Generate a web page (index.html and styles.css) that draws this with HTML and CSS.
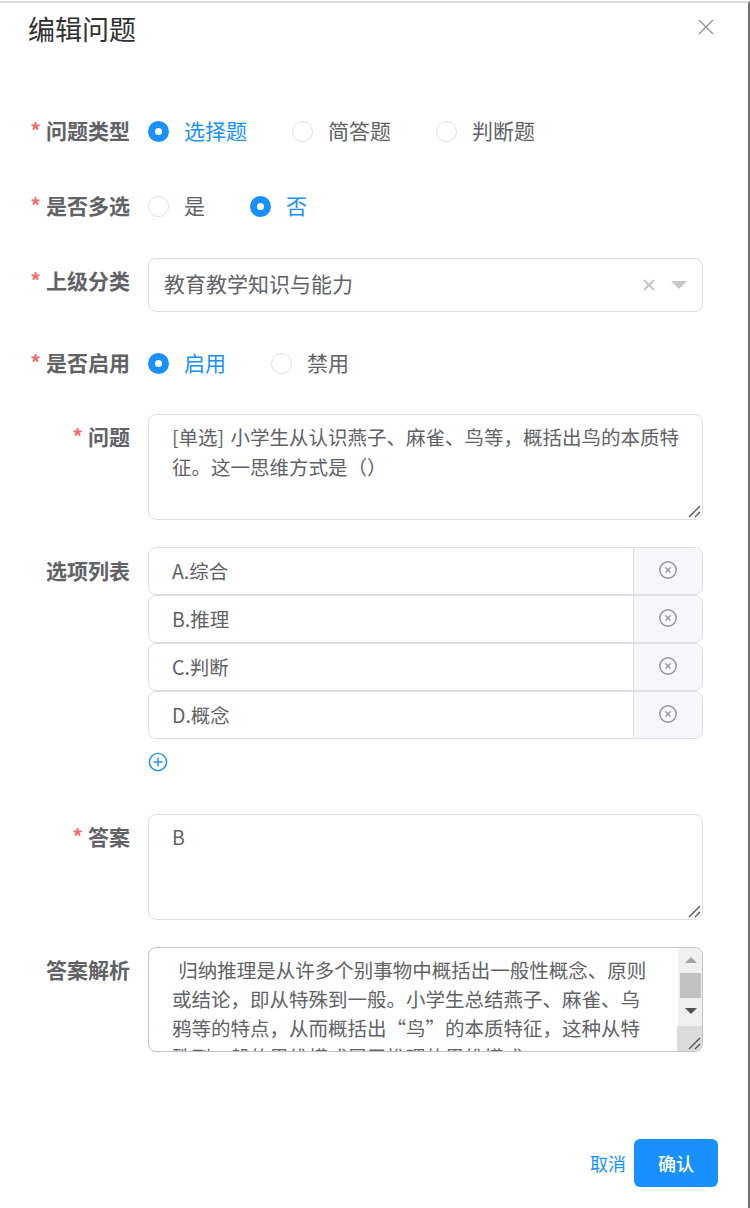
FILE: index.html
```html
<!DOCTYPE html>
<html lang="zh-CN">
<head>
  <meta charset="UTF-8">
  <title>编辑问题</title>
  <link rel="stylesheet" href="styles.css">
</head>
<body>
  <div class="dialog">
    <div class="dialog-header">
      <span class="dialog-title">编辑问题</span>
      <svg class="close" width="16" height="16" viewBox="0 0 16 16"><path d="M1 1L15 15M15 1L1 15" stroke="#909399" stroke-width="1.4" fill="none"/></svg>
    </div>

    <form class="form">
      <div class="row row-type">
        <label class="label required">问题类型</label>
        <div class="radios">
          <span class="radio checked"><i></i>选择题</span>
          <span class="radio"><i></i>简答题</span>
          <span class="radio"><i></i>判断题</span>
        </div>
      </div>

      <div class="row row-multi">
        <label class="label required">是否多选</label>
        <div class="radios">
          <span class="radio"><i></i>是</span>
          <span class="radio checked"><i></i>否</span>
        </div>
      </div>

      <div class="row row-parent">
        <label class="label required">上级分类</label>
        <div class="select">
          <span>教育教学知识与能力</span>
          <svg class="clear" width="12" height="12" viewBox="0 0 12 12"><path d="M1 1L11 11M11 1L1 11" stroke="#c8c8c8" stroke-width="2.2" fill="none"/></svg>
          <span class="caret"></span>
        </div>
      </div>

      <div class="row row-enable">
        <label class="label required">是否启用</label>
        <div class="radios">
          <span class="radio checked"><i></i>启用</span>
          <span class="radio"><i></i>禁用</span>
        </div>
      </div>

      <div class="row row-question">
        <label class="label required">问题</label>
        <div class="textarea">[单选] 小学生从认识燕子、麻雀、鸟等，概括出鸟的本质特征。这一思维方式是（）<svg class="grip" width="13" height="13" viewBox="0 0 13 13"><path d="M1 12L12 1M7 12L12 7" stroke="#555" stroke-width="1.4" fill="none"/></svg></div>
      </div>

      <div class="row row-options">
        <label class="label">选项列表</label>
        <div class="options">
          <div class="option"><span class="option-text">A.综合</span><span class="option-del"><svg width="18" height="18" viewBox="0 0 18 18"><circle cx="9" cy="9" r="8.2" stroke="#909399" stroke-width="1.4" fill="none"/><path d="M6.5 6.5L11.5 11.5M11.5 6.5L6.5 11.5" stroke="#909399" stroke-width="1.4" fill="none"/></svg></span></div>
          <div class="option"><span class="option-text">B.推理</span><span class="option-del"><svg width="18" height="18" viewBox="0 0 18 18"><circle cx="9" cy="9" r="8.2" stroke="#909399" stroke-width="1.4" fill="none"/><path d="M6.5 6.5L11.5 11.5M11.5 6.5L6.5 11.5" stroke="#909399" stroke-width="1.4" fill="none"/></svg></span></div>
          <div class="option"><span class="option-text">C.判断</span><span class="option-del"><svg width="18" height="18" viewBox="0 0 18 18"><circle cx="9" cy="9" r="8.2" stroke="#909399" stroke-width="1.4" fill="none"/><path d="M6.5 6.5L11.5 11.5M11.5 6.5L6.5 11.5" stroke="#909399" stroke-width="1.4" fill="none"/></svg></span></div>
          <div class="option"><span class="option-text">D.概念</span><span class="option-del"><svg width="18" height="18" viewBox="0 0 18 18"><circle cx="9" cy="9" r="8.2" stroke="#909399" stroke-width="1.4" fill="none"/><path d="M6.5 6.5L11.5 11.5M11.5 6.5L6.5 11.5" stroke="#909399" stroke-width="1.4" fill="none"/></svg></span></div>
          <svg class="add" width="20" height="20" viewBox="0 0 20 20"><circle cx="10" cy="10" r="8.6" stroke="#1890ff" stroke-width="1.4" fill="none"/><path d="M5.5 10H14.5M10 5.5V14.5" stroke="#1890ff" stroke-width="1.4" fill="none"/></svg>
        </div>
      </div>

      <div class="row row-answer">
        <label class="label required">答案</label>
        <div class="textarea">B<svg class="grip" width="13" height="13" viewBox="0 0 13 13"><path d="M1 12L12 1M7 12L12 7" stroke="#555" stroke-width="1.4" fill="none"/></svg></div>
      </div>

      <div class="row row-analysis">
        <label class="label">答案解析</label>
        <div class="textarea textarea-scroll">
          <div class="scroll-text">&nbsp;归纳推理是从许多个别事物中概括出一般性概念、原则或结论，即从特殊到一般。小学生总结燕子、麻雀、乌鸦等的特点，从而概括出“鸟”的本质特征，这种从特殊到一般的思维模式属于推理的思维模式。</div>
          <div class="scrollbar">
            <span class="arrow-up"></span>
            <span class="thumb"></span>
            <span class="arrow-down"></span>
          </div>
          <div class="corner"><svg class="grip" width="13" height="13" viewBox="0 0 13 13"><path d="M1 12L12 1M7 12L12 7" stroke="#555" stroke-width="1.4" fill="none"/></svg></div>
        </div>
      </div>
    </form>

    <div class="dialog-footer">
      <a class="cancel">取消</a>
      <button type="button" class="confirm">确认</button>
    </div>
  </div>
</body>
</html>
```

FILE: styles.css
```css
* {
  box-sizing: border-box;
}
html, body {
  margin: 0;
  padding: 0;
}
body {
  width: 750px;
  height: 1208px;
  padding-top: 1px;
  overflow: hidden;
  background-color: #fff;
  font-family: "Noto Sans CJK SC", "Liberation Sans", sans-serif;
  font-size: 19.5px;
  color: #606266;
}
.dialog {
  height: 1207px;
  border-top: 2px solid #dcdcdc;
  border-right: 2px solid #707070;
  display: flex;
  flex-direction: column;
}
.dialog-header {
  display: flex;
  justify-content: space-between;
  padding: 7px 34px 0 28px;
  height: 59px;
}
.dialog-title {
  font-size: 27px;
  line-height: 38px;
  color: #303133;
}
.close {
  margin-top: 9px;
}
.form {
  padding: 0 45px 0 0;
  flex: 1;
}
.row {
  display: flex;
}
.row-type { margin-top: 49px; min-height: 40px; }
.row-multi { margin-top: 35px; min-height: 40px; }
.row-parent { margin-top: 32px; }
.row-enable { margin-top: 31px; min-height: 40px; }
.row-question { margin-top: 31px; }
.row-options { margin-top: 27px; }
.row-answer { margin-top: 42px; }
.row-analysis { margin-top: 27px; }
.label {
  width: 148px;
  flex-shrink: 0;
  padding-right: 18px;
  text-align: right;
  font-size: 21px;
  font-weight: 700;
  line-height: 38px;
}
.required::before {
  content: "*";
  color: #f56c6c;
  margin-right: 5px;
  font-weight: 700;
}
.row-parent .label, .row-question .label, .row-answer .label, .row-analysis .label {
  line-height: 44px;
}
.row-options .label {
  line-height: 46px;
}
.radios {
  display: flex;
  align-items: center;
  height: 40px;
  font-size: 21px;
}
.radio {
  display: flex;
  align-items: center;
  margin-right: 45px;
  padding-bottom: 2px;
  white-space: nowrap;
}
.radio i {
  width: 21px;
  height: 21px;
  margin-top: 2px;
  margin-right: 15px;
  border: 1px solid #dcdfe6;
  border-radius: 50%;
  background-color: #fff;
}
.radio.checked {
  color: #1890ff;
}
.radio.checked i {
  border: 7px solid #1890ff;
}
.select {
  flex: 1;
  height: 54px;
  border: 1px solid #dcdfe6;
  border-radius: 8px;
  padding: 0 15px;
  display: flex;
  align-items: center;
  font-size: 21px;
}
.select span:first-child {
  flex: 1;
  padding-bottom: 4px;
}
.clear {
  margin-right: 16px;
}
.caret {
  margin-top: -1px;
  border-left: 8px solid transparent;
  border-right: 8px solid transparent;
  border-top: 8px solid #c8c8c8;
}
.textarea {
  flex: 1;
  position: relative;
  height: 106px;
  border: 1px solid #dcdfe6;
  border-radius: 8px;
  padding: 7px 18px 0 23px;
  line-height: 30px;
  word-spacing: 2px;
}
.grip {
  position: absolute;
  right: 1px;
  bottom: 1px;
}
.options {
  flex: 1;
  display: flex;
  flex-direction: column;
}
.option {
  display: flex;
  height: 48px;
  border: 1px solid #dcdfe6;
  border-radius: 8px;
}
.option-text {
  flex: 1;
  padding-left: 23px;
  line-height: 46px;
}
.option-del {
  width: 69px;
  display: flex;
  align-items: center;
  justify-content: center;
  padding-bottom: 3px;
  background-color: #f5f7fa;
  border-left: 1px solid #dcdfe6;
  border-radius: 0 8px 8px 0;
}
.add {
  margin: 13px 0 0 0;
}
.textarea-scroll {
  height: 105px;
  padding: 0;
  border-color: #c0c4cc;
  overflow: hidden;
}
.scroll-text {
  padding: 7px 48px 0 23px;
  line-height: 29px;
  height: 103px;
  overflow: hidden;
}
.scrollbar {
  position: absolute;
  top: 0;
  right: 0;
  width: 24px;
  height: 78px;
  padding: 0 1px 0 2px;
  background-color: #f0f0f0;
  display: flex;
  flex-direction: column;
  align-items: center;
}
.arrow-up, .arrow-down {
  width: 0;
  border-left: 6px solid transparent;
  border-right: 6px solid transparent;
}
.arrow-up {
  margin-top: 9px;
  border-bottom: 6px solid #a3a3a3;
}
.thumb {
  width: 21px;
  height: 25px;
  margin-top: 10px;
  background-color: #c1c1c1;
}
.arrow-down {
  margin-top: 10px;
  border-top: 6px solid #505050;
}
.corner {
  position: absolute;
  right: 0;
  bottom: 0;
  width: 25px;
  height: 25px;
  background-color: #dcdcdc;
}
.dialog-footer {
  display: flex;
  justify-content: flex-end;
  align-items: center;
  padding: 0 30px 21px 0;
}
.cancel {
  color: #1890ff;
  font-size: 18px;
  margin-right: 8px;
}
.confirm {
  width: 84px;
  height: 48px;
  border: none;
  border-radius: 6px;
  background-color: #1890ff;
  color: #fff;
  font-family: inherit;
  font-size: 18px;
  font-weight: 500;
}
```
